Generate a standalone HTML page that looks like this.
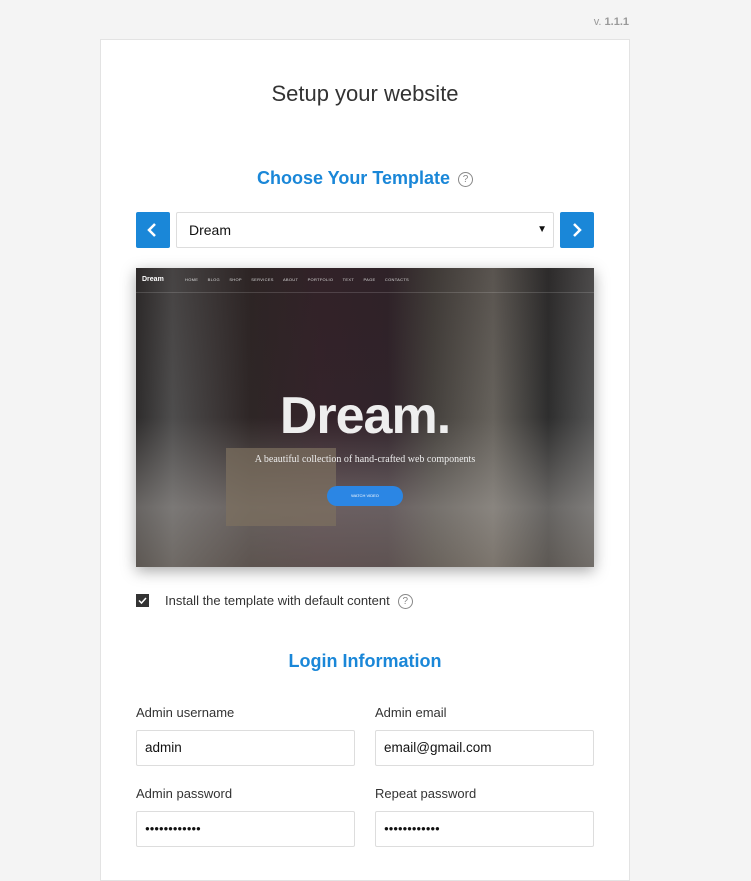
<!DOCTYPE html>
<html><head><meta charset="utf-8"><style>
body{margin:0;background:#f4f4f4;font-family:"Liberation Sans",Arial,sans-serif;width:751px;height:862px;overflow:hidden;position:relative}
.abs{position:absolute}
.card{left:100px;top:39px;width:528px;height:840px;background:#fff;border:1px solid #e3e3e3}
.ver{right:122px;top:16px;font-size:11px;color:#999}
.h1{left:100px;width:530px;top:81px;text-align:center;font-size:22px;color:#333}
.h2{font-weight:bold;color:#1a87d8;font-size:18px;text-align:center;left:100px;width:530px}
.q{display:inline-block;width:13px;height:13px;border:1px solid #888;border-radius:50%;font-size:10px;line-height:13px;text-align:center;color:#888;font-weight:normal;vertical-align:2px;margin-left:8px}
.btn{width:34px;height:36px;background:#1a87d8;border-radius:2px;top:212px}
.sel{left:176px;top:212px;width:378px;height:36px;border:1px solid #ddd;border-radius:2px;font-size:14px;line-height:34px;padding-left:12px;box-sizing:border-box;color:#111}
.lbl{font-size:13px;color:#333}
.inp{width:219px;height:36px;border:1px solid #ddd;border-radius:2px;font-size:13.5px;line-height:34px;padding-left:8px;box-sizing:border-box;color:#111}
.dots{font-size:8px;letter-spacing:-0.2px}
.img{left:136px;top:268px;width:458px;height:299px;overflow:hidden;box-shadow:0 4px 14px rgba(0,0,0,.35);
background:linear-gradient(90deg,#2e2c2c 0%,#4e4d4d 8%,#2e2626 25%,#34232a 40%,#30232a 55%,#45413d 65%,#66625c 78%,#2e2e2e 90%,#555 100%)}
</style></head><body>
<div class="abs ver">v. <b>1.1.1</b></div>
<div class="abs card"></div>
<div class="abs h1">Setup your website</div>
<div class="abs h2" style="top:168px">Choose Your Template<span class="q">?</span></div>
<div class="abs btn" style="left:136px"><svg width="34" height="36"><path d="M19 12l-6 6 6 6" stroke="#fff" stroke-width="2.5" fill="none"/></svg></div>
<div class="abs sel">Dream<span style="position:absolute;right:6px;font-size:10px">▼</span></div>
<div class="abs btn" style="left:560px"><svg width="34" height="36"><path d="M14 12l6 6-6 6" stroke="#fff" stroke-width="2.5" fill="none"/></svg></div>
<div class="abs img">
 <div class="abs" style="left:0;top:0;width:458px;height:299px;background:linear-gradient(180deg,rgba(40,30,30,.2) 0%,rgba(0,0,0,0) 50%,rgba(190,185,180,.4) 80%,rgba(150,140,130,.45) 100%)"></div>
 <div class="abs" style="left:90px;top:180px;width:110px;height:78px;background:#7e7160;opacity:.7"></div>
 <div class="abs" style="left:0;top:24px;width:458px;height:1px;background:rgba(255,255,255,.15)"></div>
 <div class="abs" style="left:6px;top:8px;font-size:7px;font-weight:bold;color:#fff">Dream</div>
 <div class="abs" style="left:49px;top:9px;font-size:4px;color:#ddd;letter-spacing:.3px;word-spacing:8px">HOME BLOG SHOP SERVICES ABOUT PORTFOLIO TEXT&nbsp;PAGE CONTACTS</div>
 <div class="abs" style="left:0;top:118px;width:458px;text-align:center;font-size:52px;font-weight:bold;color:#eee;letter-spacing:-1px">Dream.</div>
 <div class="abs" style="left:0;top:186px;width:458px;text-align:center;font-family:'Liberation Serif',serif;font-size:10px;color:#eee">A beautiful collection of hand-crafted web components</div>
 <div class="abs" style="left:191px;top:218px;width:76px;height:20px;border-radius:10px;background:#2b86e4;color:#fff;font-size:4px;text-align:center;line-height:20px">WATCH VIDEO</div>
</div>
<div class="abs" style="left:136px;top:594px;width:13px;height:13px;background:#333"><svg width="13" height="13"><path d="M3 6.5l2.5 2.5 4.5-5" stroke="#fff" stroke-width="1.5" fill="none"/></svg></div>
<div class="abs lbl" style="left:165px;top:593px">Install the template with default content<span class="q" style="vertical-align:1px">?</span></div>
<div class="abs h2" style="top:651px">Login Information</div>
<div class="abs lbl" style="left:136px;top:705px">Admin username</div>
<div class="abs lbl" style="left:375px;top:705px">Admin email</div>
<div class="abs inp" style="left:136px;top:730px">admin</div>
<div class="abs inp" style="left:375px;top:730px">email@gmail.com</div>
<div class="abs lbl" style="left:136px;top:786px">Admin password</div>
<div class="abs lbl" style="left:375px;top:786px">Repeat password</div>
<div class="abs inp dots" style="left:136px;top:811px">●●●●●●●●●●●●</div>
<div class="abs inp dots" style="left:375px;top:811px">●●●●●●●●●●●●</div>
</body></html>
